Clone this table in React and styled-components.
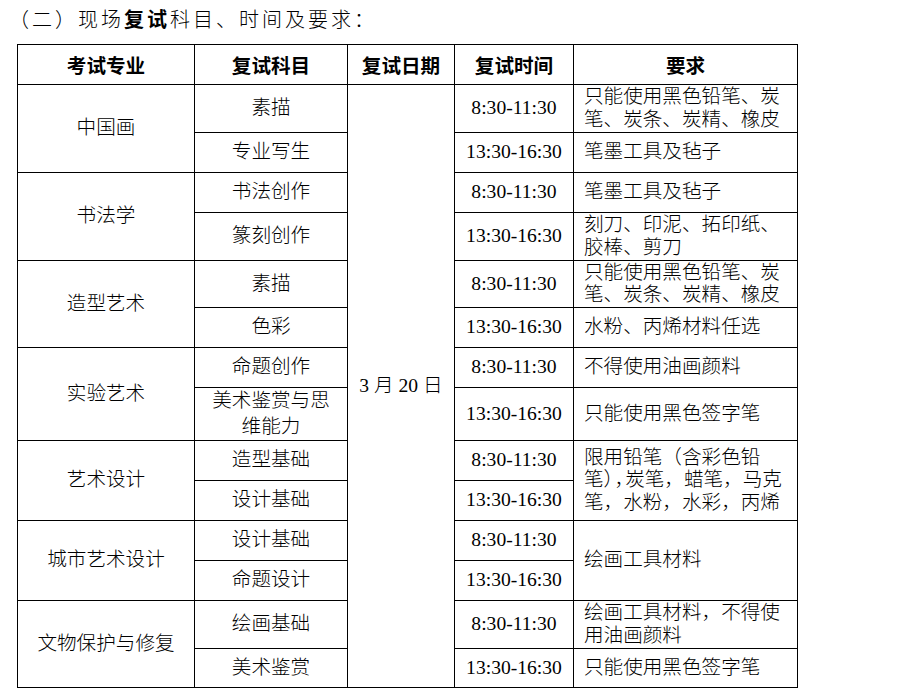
import React from "react";
import styled, { createGlobalStyle } from "styled-components";

const GlobalStyle = createGlobalStyle`
  html, body {
    margin: 0;
    padding: 0;
    background: #ffffff;
  }
  body {
    font-family: "Liberation Serif", "Noto Sans CJK SC", serif;
    color: #000000;
    text-spacing-trim: space-all;
  }
`;

const Page = styled.div`
  width: 900px;
  height: 693px;
  overflow: hidden;
  padding-left: 17px;
  box-sizing: border-box;
`;

const Title = styled.div`
  height: 44px;
  line-height: 40px;
  margin-left: -8px;
  font-size: 20px;
  font-weight: 300;
  letter-spacing: 3px;
  white-space: nowrap;
`;

const Strong = styled.span`
  font-weight: 700;
`;

const Table = styled.table`
  border-collapse: collapse;
  table-layout: fixed;
  width: 780px;
  font-size: 19.6px;
`;

const Row = styled.tr`
  height: ${({ $h }) => $h}px;
`;

const HeadCell = styled.th`
  border: 1px solid #000;
  padding: 0 10px;
  font-family: "Noto Sans CJK SC", sans-serif;
  font-weight: 700;
  font-size: 19.6px;
  text-align: center;
  vertical-align: middle;
  line-height: 22px;
`;

const Cell = styled.td`
  border: 1px solid #000;
  padding: 0 10px;
  text-align: center;
  vertical-align: middle;
  font-weight: 300;
  line-height: ${({ $loose }) => ($loose ? "26px" : "22.5px")};
  white-space: nowrap;
`;

const DateCell = styled(Cell)`
  padding: 0 4px;
`;

const TimeCell = styled(Cell)`
  padding: 0 4px;
  font-weight: 400;
`;

const ReqCell = styled(Cell)`
  text-align: left;
  padding: 0 10px;
  overflow: visible;
`;

const Line = styled.div`
  white-space: nowrap;
`;

const Tight = styled.span`
  letter-spacing: ${({ $by }) => $by || "-0.45em"};
`;

const groups = [
  {
    major: "中国画",
    rows: [
      { subject: ["素描"], time: "8:30-11:30", req: ["只能使用黑色铅笔、炭", "笔、炭条、炭精、橡皮"], h: 48 },
      { subject: ["专业写生"], time: "13:30-16:30", req: ["笔墨工具及毡子"], h: 40 },
    ],
  },
  {
    major: "书法学",
    rows: [
      { subject: ["书法创作"], time: "8:30-11:30", req: ["笔墨工具及毡子"], h: 40 },
      { subject: ["篆刻创作"], time: "13:30-16:30", req: ["刻刀、印泥、拓印纸、", "胶棒、剪刀"], h: 48 },
    ],
  },
  {
    major: "造型艺术",
    rows: [
      { subject: ["素描"], time: "8:30-11:30", req: ["只能使用黑色铅笔、炭", "笔、炭条、炭精、橡皮"], h: 47 },
      { subject: ["色彩"], time: "13:30-16:30", req: ["水粉、丙烯材料任选"], h: 40 },
    ],
  },
  {
    major: "实验艺术",
    rows: [
      { subject: ["命题创作"], time: "8:30-11:30", req: ["不得使用油画颜料"], h: 40 },
      { subject: ["美术鉴赏与思", "维能力"], time: "13:30-16:30", req: ["只能使用黑色签字笔"], h: 51, loose: true },
    ],
  },
  {
    major: "艺术设计",
    rows: [
      {
        subject: ["造型基础"],
        time: "8:30-11:30",
        req: [
          "限用铅笔（含彩色铅",
          <>笔<Tight>）</Tight><Tight>，</Tight>炭笔，蜡笔，马克</>,
          "笔，水粉，水彩，丙烯",
        ],
        reqSpan: 2,
        h: 40,
      },
      { subject: ["设计基础"], time: "13:30-16:30", h: 40 },
    ],
  },
  {
    major: "城市艺术设计",
    rows: [
      { subject: ["设计基础"], time: "8:30-11:30", req: ["绘画工具材料"], reqSpan: 2, h: 40 },
      { subject: ["命题设计"], time: "13:30-16:30", h: 40 },
    ],
  },
  {
    major: "文物保护与修复",
    rows: [
      { subject: ["绘画基础"], time: "8:30-11:30", req: ["绘画工具材料，不得使", "用油画颜料"], h: 48 },
      { subject: ["美术鉴赏"], time: "13:30-16:30", req: ["只能使用黑色签字笔"], h: 39 },
    ],
  },
];

const totalRows = groups.reduce((n, g) => n + g.rows.length, 0);

const App = () => {
  return (
    <>
      <GlobalStyle />
      <Page>
        <Title>
          （二）现场<Strong>复试</Strong>科目、时间及要求：
        </Title>
        <Table>
          <colgroup>
            <col style={{ width: 177 }} />
            <col style={{ width: 153 }} />
            <col style={{ width: 107 }} />
            <col style={{ width: 119 }} />
            <col style={{ width: 224 }} />
          </colgroup>
          <thead>
            <Row $h={40}>
              <HeadCell>考试专业</HeadCell>
              <HeadCell>复试科目</HeadCell>
              <HeadCell>复试日期</HeadCell>
              <HeadCell>复试时间</HeadCell>
              <HeadCell>要求</HeadCell>
            </Row>
          </thead>
          <tbody>
            {groups.map((g, gi) =>
              g.rows.map((r, ri) => (
                <Row $h={r.h} key={`${gi}-${ri}`}>
                  {ri === 0 && <Cell rowSpan={g.rows.length}>{g.major}</Cell>}
                  <Cell $loose={r.loose}>
                    {r.subject.map((line, li) => (
                      <Line key={li}>{line}</Line>
                    ))}
                  </Cell>
                  {gi === 0 && ri === 0 && (
                    <DateCell rowSpan={totalRows}>3 月 20 日</DateCell>
                  )}
                  <TimeCell>{r.time}</TimeCell>
                  {r.req && (
                    <ReqCell rowSpan={r.reqSpan || 1}>
                      {r.req.map((line, li) => (
                        <Line key={li}>{line}</Line>
                      ))}
                    </ReqCell>
                  )}
                </Row>
              ))
            )}
          </tbody>
        </Table>
      </Page>
    </>
  );
};

export default App;
